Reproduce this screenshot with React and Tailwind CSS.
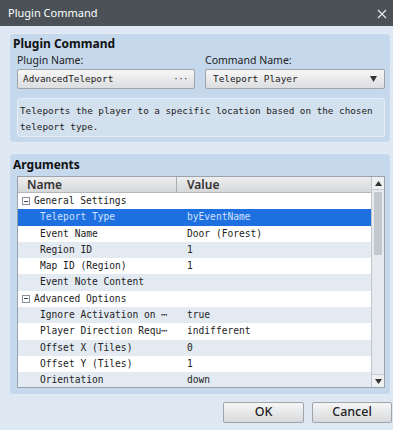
import React from "react";

const mono = { fontFamily: '"DejaVu Sans Mono", monospace' };
const sans = { fontFamily: '"Noto Sans", "Open Sans", sans-serif' };

function Expand() {
  return (
    <span className="inline-flex w-[8px] h-[8px] border border-[#8a9098] bg-white items-center justify-center mr-[4px]">
      <span className="block w-[4px] h-[1px] bg-[#40464c]" />
    </span>
  );
}

const rows = [
  { group: true, name: "General Settings" },
  { name: "Teleport Type", value: "byEventName", sel: true },
  { name: "Event Name", value: "Door (Forest)" },
  { name: "Region ID", value: "1" },
  { name: "Map ID (Region)", value: "1" },
  { name: "Event Note Content", value: "" },
  { group: true, name: "Advanced Options" },
  { name: "Ignore Activation on \u22EF", value: "true" },
  { name: "Player Direction Requ\u22EF", value: "indifferent" },
  { name: "Offset X (Tiles)", value: "0" },
  { name: "Offset Y (Tiles)", value: "1" },
  { name: "Orientation", value: "down" },
];

export default function App() {
  return (
    <div className="w-[393px] h-[430px] bg-[#dde8f3] flex flex-col overflow-hidden text-[#222]">
      <div className="h-[26px] bg-[#4a5258] flex items-center justify-between pl-[8px] pr-[6px] shrink-0">
        <span className="text-white text-[11px]" style={sans}>Plugin Command</span>
        <svg width="10" height="10" viewBox="0 0 10 10" className="mt-[1px]">
          <path d="M1 1L9 9M9 1L1 9" stroke="#e6e9ec" strokeWidth="1.2" />
        </svg>
      </div>

      <div className="mt-[7px] ml-[9px] mr-[2px] h-[110px] bg-[#c5d8ec] rounded-[4px] border border-[#e3ecf6] pl-[7px] pr-[5px] shrink-0">
        <div className="mt-[2px] -ml-[4px] text-[12px] font-bold leading-[15px] text-[#111]" style={sans}>Plugin Command</div>
        <div className="flex mt-[3px] gap-[10px]">
          <div className="w-[178px]">
            <div className="text-[10.5px] leading-[13px] text-[#222]" style={sans}>Plugin Name:</div>
            <div className="mt-[2px] h-[20px] rounded-[2px] border border-[#9ea4aa] bg-gradient-to-b from-[#f7f7f7] to-[#dcdde0] flex items-center justify-between pl-[5px] pr-[6px]">
              <span className="text-[9.4px]" style={mono}>AdvancedTeleport</span>
              <span className="text-[9px] leading-none tracking-[-0.5px] text-[#333]" style={mono}>···</span>
            </div>
          </div>
          <div className="w-[180px]">
            <div className="text-[10.5px] leading-[13px] text-[#222]" style={sans}>Command Name:</div>
            <div className="mt-[2px] h-[20px] rounded-[2px] border border-[#9ea4aa] bg-gradient-to-b from-[#f7f7f7] to-[#dcdde0] flex items-center justify-between pl-[7px] pr-[7px]">
              <span className="text-[9.4px]" style={mono}>Teleport Player</span>
              <svg width="7" height="6" viewBox="0 0 7 6"><path d="M0 0H7L3.5 6Z" fill="#333" /></svg>
            </div>
          </div>
        </div>
        <div className="mt-[9px] h-[39px] rounded-[3px] border border-[#e6eef7] bg-[#d3e0ed] px-[2px] pt-[4px] text-[9.3px] leading-[16px]" style={mono}>
          Teleports the player to a specific location based on the chosen teleport type.
        </div>
      </div>

      <div className="mt-[10px] ml-[9px] mr-[2px] h-[242px] bg-[#c5d8ec] rounded-[4px] border border-[#e3ecf6] pl-[7px] pr-[5px] shrink-0">
        <div className="mt-[3px] -ml-[4px] text-[12px] font-bold leading-[15px] text-[#111]" style={sans}>Arguments</div>
        <div className="mt-[4px] h-[212px] bg-[#e3eaf2] border border-[#9aa3ad] flex">
          <div className="flex-1 flex flex-col overflow-hidden">
            <div className="h-[16px] flex shrink-0 bg-gradient-to-b from-[#eeeeee] to-[#d6d7d9] border-b border-[#b4b8bd] text-[12px] font-semibold text-[#333] leading-none" style={sans}>
              <div className="w-[159px] border-r border-[#a9adb2] pl-[9px] flex items-center">Name</div>
              <div className="flex-1 pl-[10px] flex items-center">Value</div>
            </div>
            {rows.map((r, i) => (
              <div
                key={i}
                className={
                  "h-[16.3px] flex items-center shrink-0 text-[9.6px] " +
                  (r.sel ? "bg-[#1e6fe0] text-[#cfe2ff]" : i % 2 === 0 ? "bg-white" : "bg-[#e3eaf2]")
                }
                style={mono}
              >
                {r.group ? (
                  <div className="pl-[4px] flex items-center">
                    <Expand />
                    <span>{r.name}</span>
                  </div>
                ) : (
                  <>
                    <div className="w-[159px] pl-[22px] whitespace-nowrap overflow-hidden">{r.name}</div>
                    <div className="flex-1 pl-[10px] whitespace-nowrap">{r.value}</div>
                  </>
                )}
              </div>
            ))}
          </div>
          <div className="w-[13px] border-l border-[#c0c5cb] bg-[#e6e9ed] flex flex-col shrink-0">
            <div className="h-[13px] flex items-center justify-center bg-[#eef0f2] border-b border-[#c8ccd0]">
              <svg width="7" height="5" viewBox="0 0 7 5"><path d="M0 5H7L3.5 0Z" fill="#333" /></svg>
            </div>
            <div className="mt-[2px] mx-[2px] h-[63px] bg-[#c3c8ce] rounded-[1px]" />
            <div className="flex-1" />
            <div className="h-[13px] flex items-center justify-center bg-[#eef0f2] border-t border-[#c8ccd0]">
              <svg width="7" height="5" viewBox="0 0 7 5"><path d="M0 0H7L3.5 5Z" fill="#333" /></svg>
            </div>
          </div>
        </div>
      </div>

      <div className="mt-[7px] flex justify-end gap-[8px] pr-[1px]">
        <button className="w-[81px] h-[21px] rounded-[2px] border border-[#9ea4aa] bg-gradient-to-b from-[#f6f6f6] to-[#d8d9dc] text-[12.5px] font-medium text-[#222] leading-none" style={sans}>OK</button>
        <button className="w-[80px] h-[21px] rounded-[2px] border border-[#9ea4aa] bg-gradient-to-b from-[#f6f6f6] to-[#d8d9dc] text-[12.5px] font-medium text-[#222] leading-none" style={sans}>Cancel</button>
      </div>
    </div>
  );
}
